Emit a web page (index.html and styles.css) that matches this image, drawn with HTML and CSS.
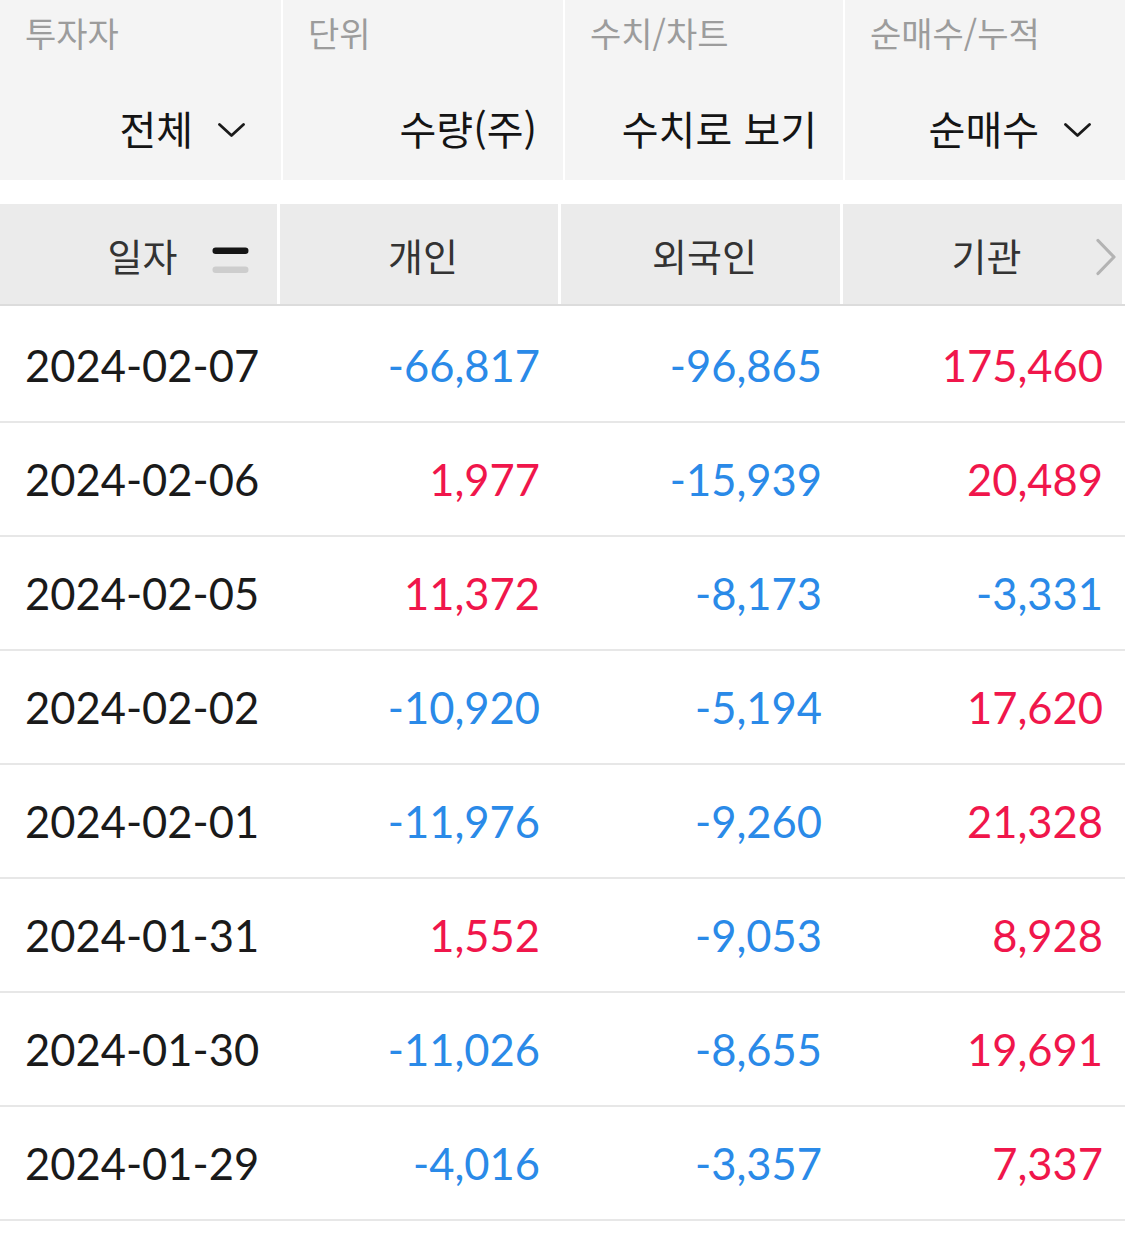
FILE: index.html
```html
<!DOCTYPE html>
<html lang="ko">
<head>
<meta charset="utf-8">
<title>투자자별 매매동향</title>
<link rel="stylesheet" href="styles.css">
</head>
<body>
<div class="page">
  <section class="filters">
    <div class="filter">
      <div class="filter-label">투자자</div>
      <div class="filter-value">전체<span class="chev"><svg width="27" height="14" viewBox="0 0 27 14"><polyline points="1.5,1.5 13.5,12.5 25.5,1.5" fill="none" stroke="#1a1a1a" stroke-width="2.8" stroke-linecap="round" stroke-linejoin="round"/></svg></span></div>
    </div>
    <div class="filter">
      <div class="filter-label">단위</div>
      <div class="filter-value">수량(주)</div>
    </div>
    <div class="filter">
      <div class="filter-label">수치/차트</div>
      <div class="filter-value">수치로 보기</div>
    </div>
    <div class="filter">
      <div class="filter-label">순매수/누적</div>
      <div class="filter-value">순매수<span class="chev"><svg width="27" height="14" viewBox="0 0 27 14"><polyline points="1.5,1.5 13.5,12.5 25.5,1.5" fill="none" stroke="#1a1a1a" stroke-width="2.8" stroke-linecap="round" stroke-linejoin="round"/></svg></span></div>
    </div>
  </section>

  <section class="table">
    <div class="thead">
      <div class="th">일자<svg class="sort" width="37" height="27" viewBox="0 0 37 27"><rect x="0.5" y="0.5" width="36" height="6.5" rx="3.2" fill="#151515"/><rect x="0.5" y="19.5" width="36" height="6.5" rx="3.2" fill="#cdcdcd"/></svg></div>
      <div class="th">개인</div>
      <div class="th">외국인</div>
      <div class="th">기관<svg class="more" width="22" height="38" viewBox="0 0 22 38"><polyline points="3,2.5 19,19 3,35.5" fill="none" stroke="#b3b3b3" stroke-width="3.2" stroke-linecap="round" stroke-linejoin="round"/></svg></div>
    </div>
    <div class="tbody">
      <div class="tr"><div class="date">2024-02-07</div><div class="num down">-66,817</div><div class="num down">-96,865</div><div class="num up">175,460</div></div>
      <div class="tr"><div class="date">2024-02-06</div><div class="num up">1,977</div><div class="num down">-15,939</div><div class="num up">20,489</div></div>
      <div class="tr"><div class="date">2024-02-05</div><div class="num up">11,372</div><div class="num down">-8,173</div><div class="num down">-3,331</div></div>
      <div class="tr"><div class="date">2024-02-02</div><div class="num down">-10,920</div><div class="num down">-5,194</div><div class="num up">17,620</div></div>
      <div class="tr"><div class="date">2024-02-01</div><div class="num down">-11,976</div><div class="num down">-9,260</div><div class="num up">21,328</div></div>
      <div class="tr"><div class="date">2024-01-31</div><div class="num up">1,552</div><div class="num down">-9,053</div><div class="num up">8,928</div></div>
      <div class="tr"><div class="date">2024-01-30</div><div class="num down">-11,026</div><div class="num down">-8,655</div><div class="num up">19,691</div></div>
      <div class="tr"><div class="date">2024-01-29</div><div class="num down">-4,016</div><div class="num down">-3,357</div><div class="num up">7,337</div></div>
    </div>
  </section>
</div>
</body>
</html>
```

FILE: styles.css
```css
* { box-sizing: border-box; }

html, body {
  margin: 0;
  padding: 0;
  background: #ffffff;
}

body {
  font-family: "Noto Sans CJK KR", "Noto Sans", sans-serif;
  color: #1a1a1a;
}

.page {
  width: 1125px;
}

/* ---------- filter band ---------- */
.filters {
  display: grid;
  grid-template-columns: 281px 280px 278px 282px;
  column-gap: 2px;
  height: 180px;
}

.filter {
  background: #f4f4f4;
  padding: 13px 0 0 25px;
  display: flex;
  flex-direction: column;
}

.filter-label {
  font-size: 34px;
  line-height: 40px;
  color: #9c9c9c;
  white-space: nowrap;
}

.filter-value {
  margin-top: 50px;
  height: 50px;
  line-height: 50px;
  font-size: 40px;
  color: #141414;
  display: flex;
  justify-content: flex-end;
  align-items: center;
  padding-right: 26px;
  white-space: nowrap;
}

.chev {
  display: inline-flex;
  margin-left: 25px;
  margin-right: 10px;
  margin-top: 4px;
}

/* ---------- table ---------- */
.table {
  margin-top: 24px;
}

.thead {
  display: grid;
  grid-template-columns: 277px 278px 279px 279px;
  column-gap: 3px;
  height: 102px;
  border-bottom: 2px solid #dcdcdc;
  padding-right: 3px;
}

.th {
  position: relative;
  background: #ebebeb;
  height: 100px;
  display: flex;
  align-items: center;
  justify-content: center;
  padding-left: 8px;
  font-size: 38px;
  color: #333333;
}

.sort {
  position: absolute;
  right: 28px;
  top: 43px;
}

.more {
  position: absolute;
  right: 5px;
  top: 34px;
}

.tbody {
  padding-top: 3px;
}

.tr {
  display: grid;
  grid-template-columns: 280px 281px 282px 282px;
  height: 114px;
  border-bottom: 2px solid #e7e7e7;
  align-items: center;
  font-family: "Lato", "Liberation Sans", sans-serif;
  font-size: 43.5px;
}

.date {
  padding-left: 25px;
  color: #1a1a1a;
}

.num {
  text-align: right;
  padding-right: 21px;
}

.tr .num:last-child {
  padding-right: 22px;
}

.up { color: #f0164b; }
.down { color: #2a8ae8; }
```
